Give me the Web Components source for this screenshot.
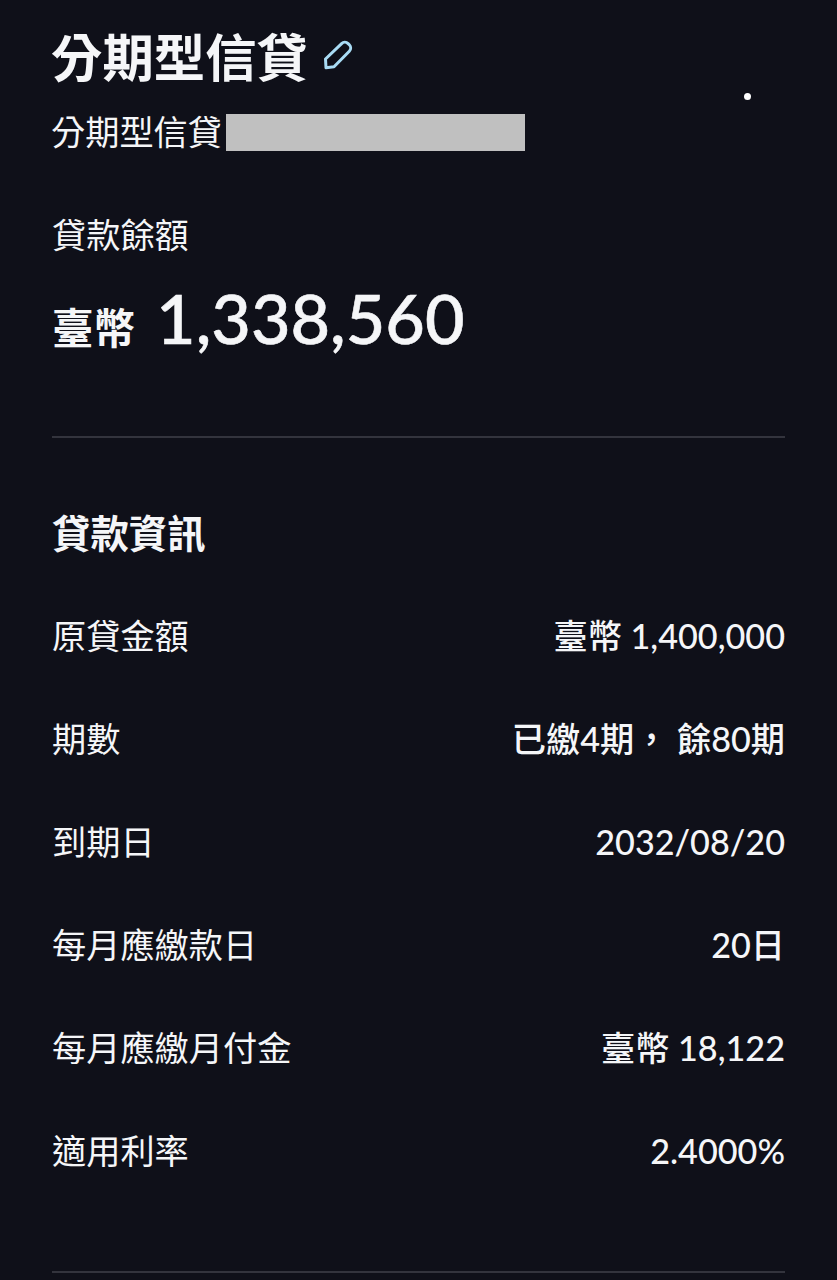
<!DOCTYPE html>
<html lang="zh-Hant">
<head>
<meta charset="utf-8">
<title>分期型信貸</title>
<style>
  html, body { margin: 0; background: #0f1019; height: 1280px; overflow: hidden; }
  body { color: #f5f6f8; font-family: Lato, "Noto Sans CJK TC", sans-serif; }
</style>
</head>
<body>
<loan-page>
  <loan-header title-text="分期型信貸" subtitle="分期型信貸"></loan-header>
  <loan-balance label="貸款餘額" currency="臺幣" amount="1,338,560"></loan-balance>
  <loan-info heading="貸款資訊">
    <info-row label="原貸金額" value="臺幣 1,400,000"></info-row>
    <info-row label="期數" value="已繳4期， 餘80期"></info-row>
    <info-row label="到期日" value="2032/08/20"></info-row>
    <info-row label="每月應繳款日" value="20日"></info-row>
    <info-row label="每月應繳月付金" value="臺幣 18,122"></info-row>
    <info-row label="適用利率" value="2.4000%"></info-row>
  </loan-info>
</loan-page>

<script>
class LoanPage extends HTMLElement {
  constructor() {
    super()
    this.attachShadow({ mode: 'open' }).innerHTML = `
      <style>
        :host {
          display: flex;
          flex-direction: column;
          position: relative;
          padding: 0 52px;
          height: 1280px;
          box-sizing: border-box;
        }
        .dot {
          position: absolute;
          left: 744px;
          top: 93px;
          width: 7px;
          height: 7px;
          border-radius: 50%;
          background: #fff;
        }
      </style>
      <slot></slot>
      <div class="dot"></div>`
  }
}

class LoanHeader extends HTMLElement {
  connectedCallback() {
    this.attachShadow({ mode: 'open' }).innerHTML = `
      <style>
        :host { display: block; padding-top: 27px; margin-left: -1px; }
        .title {
          display: flex;
          align-items: center;
          gap: 15px;
          font-size: 51.4px;
          line-height: 60px;
          font-weight: 700;
        }
        svg { width: 30px; height: 30px; flex: none; margin-top: -4px; }
        .sub {
          display: flex;
          align-items: center;
          gap: 4px;
          margin-top: 26px;
          font-size: 34.2px;
          line-height: 38px;
        }
        .redact { width: 299px; height: 37px; background: #c0c0c0; }
      </style>
      <div class="title">
        <span>${this.getAttribute('title-text')}</span>
        <svg viewBox="0 0 30 30" fill="none" stroke="#a9dcf5" stroke-width="3" stroke-linejoin="round">
          <path d="M2.5 19 L18.6 3.6 a4.6 4.6 0 0 1 6.5 0 l1.2 1.2 a4.6 4.6 0 0 1 0 6.5 L11 26.8 L3 27.8 Z"/>
        </svg>
      </div>
      <div class="sub"><span>${this.getAttribute('subtitle')}</span><div class="redact"></div></div>`
  }
}

class LoanBalance extends HTMLElement {
  connectedCallback() {
    this.attachShadow({ mode: 'open' }).innerHTML = `
      <style>
        :host {
          display: block;
          margin-top: 65px;
          padding-bottom: 63px;
          border-bottom: 2px solid #33343d;
        }
        .label { font-size: 34.2px; line-height: 38px; }
        .money {
          display: flex;
          align-items: baseline;
          gap: 21px;
          margin-top: 19px;
          line-height: 90px;
        }
        .cur { font-size: 41.5px; font-weight: 700; }
        .amt { font-size: 68.3px; font-weight: 500; -webkit-text-stroke: 0.6px currentColor; }
      </style>
      <div class="label">${this.getAttribute('label')}</div>
      <div class="money">
        <span class="cur">${this.getAttribute('currency')}</span>
        <span class="amt">${this.getAttribute('amount')}</span>
      </div>`
  }
}

class LoanInfo extends HTMLElement {
  connectedCallback() {
    this.attachShadow({ mode: 'open' }).innerHTML = `
      <style>
        :host {
          display: block;
          padding-top: 70px;
          padding-bottom: 100px;
          border-bottom: 2px solid #33343d;
        }
        h2 {
          margin: 0 0 58px;
          font-size: 38.4px;
          line-height: 50px;
          font-weight: 700;
        }
        .rows { display: flex; flex-direction: column; gap: 63px; }
      </style>
      <h2>${this.getAttribute('heading')}</h2>
      <div class="rows"><slot></slot></div>`
  }
}

class InfoRow extends HTMLElement {
  connectedCallback() {
    this.attachShadow({ mode: 'open' }).innerHTML = `
      <style>
        :host {
          display: flex;
          justify-content: space-between;
          align-items: center;
          font-size: 34.2px;
          line-height: 40px;
          white-space: nowrap;
        }
        .value { font-weight: 500; }
      </style>
      <span>${this.getAttribute('label')}</span>
      <span class="value">${this.getAttribute('value')}</span>`
  }
}

customElements.define('loan-page', LoanPage)
customElements.define('loan-header', LoanHeader)
customElements.define('loan-balance', LoanBalance)
customElements.define('loan-info', LoanInfo)
customElements.define('info-row', InfoRow)
</script>
</body>
</html>
